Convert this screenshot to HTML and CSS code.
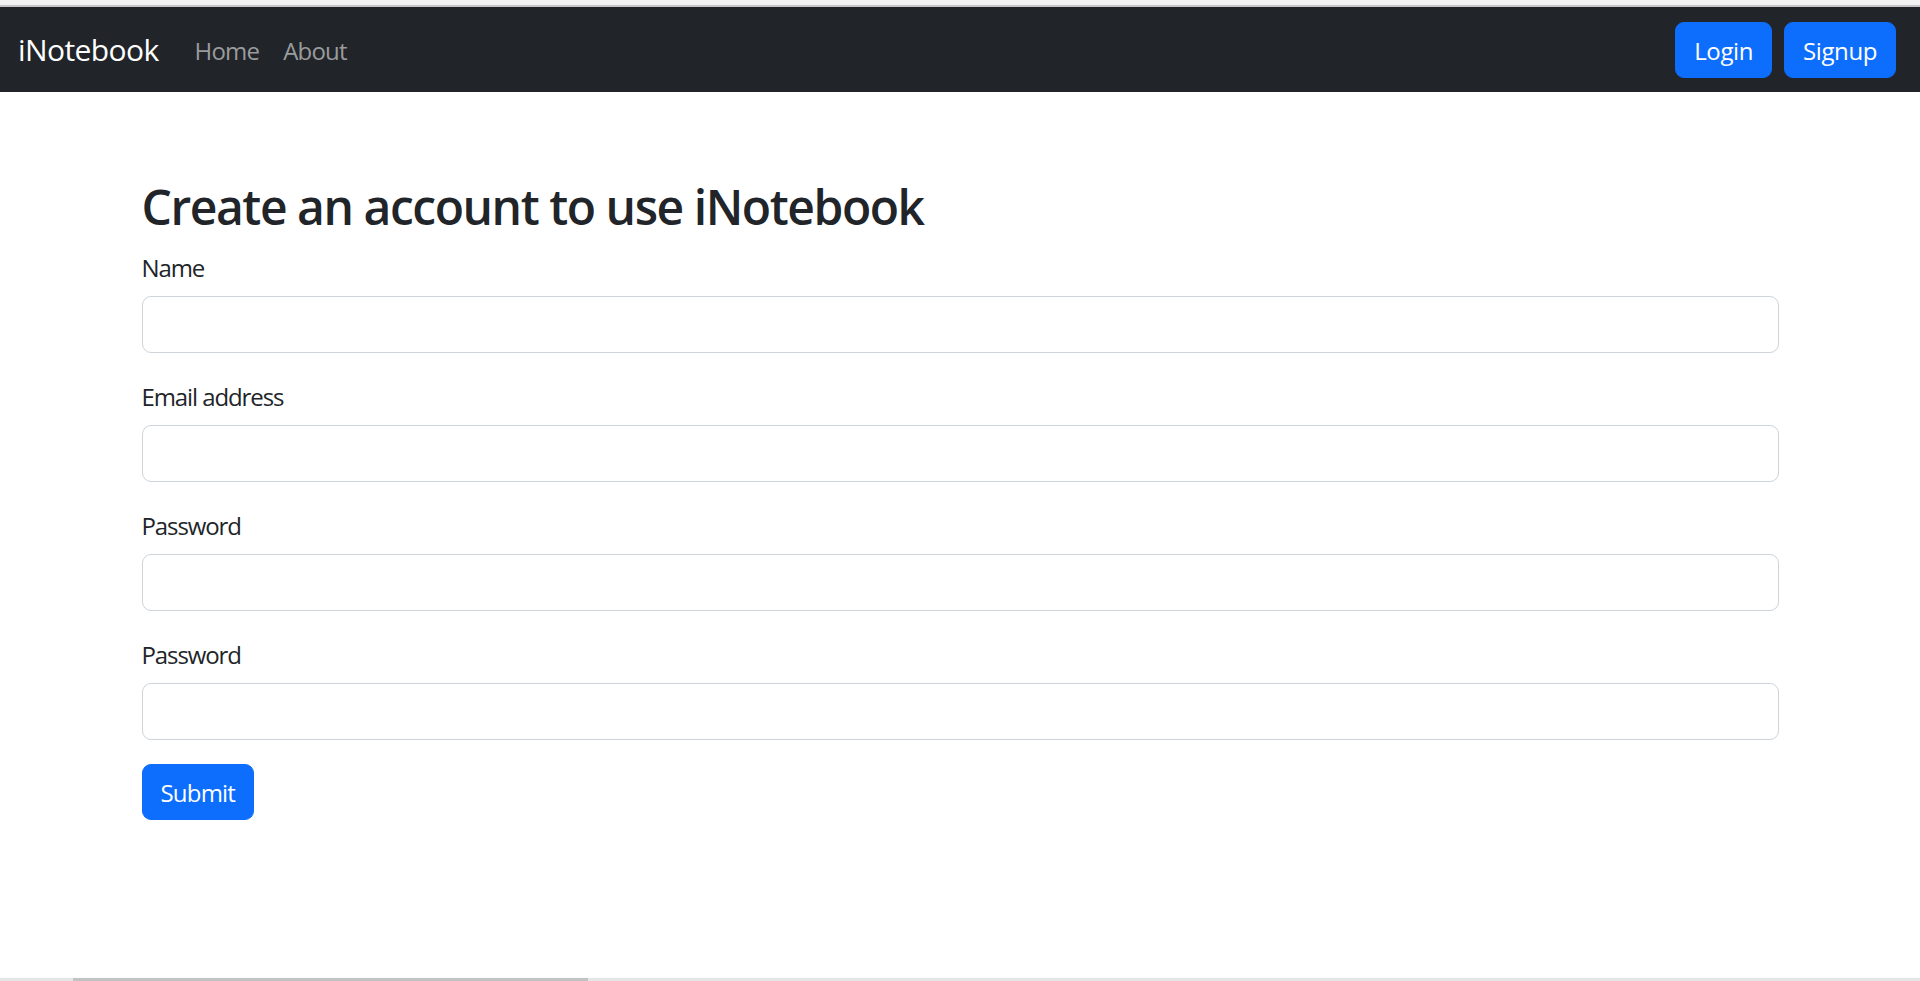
FILE: index.html
```html
<!DOCTYPE html>
<html lang="en">
<head>
<meta charset="utf-8">
<title>iNotebook</title>
<link rel="stylesheet" href="styles.css">
</head>
<body>
<div class="chrome-top"></div>
<nav class="navbar">
  <a class="brand" href="#">iNotebook</a>
  <ul class="nav-links">
    <li><a href="#">Home</a></li>
    <li><a href="#">About</a></li>
  </ul>
  <div class="nav-actions">
    <a class="btn" href="#">Login</a>
    <a class="btn" href="#">Signup</a>
  </div>
</nav>
<main class="page">
  <div class="container">
    <h2 class="title">Create an account to use iNotebook</h2>
    <form class="form">
      <div class="field">
        <label for="name">Name</label>
        <input id="name" type="text">
      </div>
      <div class="field">
        <label for="email">Email address</label>
        <input id="email" type="email">
      </div>
      <div class="field">
        <label for="password">Password</label>
        <input id="password" type="password">
      </div>
      <div class="field">
        <label for="cpassword">Password</label>
        <input id="cpassword" type="password">
      </div>
      <button type="submit" class="btn btn-submit">Submit</button>
    </form>
  </div>
</main>
<div class="scrollbar"><div class="thumb"></div></div>
</body>
</html>
```
FILE: styles.css
```css
* { box-sizing: border-box; }
html, body { margin: 0; padding: 0; }
body {
  height: 981px;
  overflow: hidden;
  display: flex;
  flex-direction: column;
  font-family: "Open Sans", "Noto Sans", sans-serif;
  font-size: 24px;
  line-height: 36px;
  color: #212529;
  background: #fff;
  letter-spacing: -0.4px;
}
.chrome-top {
  height: 7px;
  flex: none;
  background: #f3f3f3;
  border-bottom: 2px solid #c6c6c6;
}
.navbar {
  height: 85px;
  flex: none;
  background: #212529;
  display: flex;
  align-items: center;
  padding: 0 24px 0 18px;
}
.brand {
  color: #fff;
  text-decoration: none;
  font-size: 30px;
  line-height: 45px;
  margin-right: 24px;
  letter-spacing: -0.6px;
}
.nav-links {
  list-style: none;
  margin: 0;
  padding: 0;
  display: flex;
}
.nav-links a {
  display: block;
  padding: 13px 12px 11px;
  color: #9a9b9d;
  text-decoration: none;
  letter-spacing: -0.8px;
}
.nav-actions {
  margin-left: auto;
  display: flex;
  gap: 12px;
}
.btn {
  display: inline-block;
  background: #0d6efd;
  color: #fff;
  border: 1px solid #0d6efd;
  border-radius: 9px;
  padding: 10px 18px 8px;
  font-family: inherit;
  font-size: 24px;
  line-height: 36px;
  letter-spacing: -0.4px;
  text-decoration: none;
  cursor: pointer;
}
.btn-submit {
  letter-spacing: -0.8px;
}
.page {
  flex: 1;
  padding-top: 86px;
}
.container {
  max-width: 1637px;
  margin: 0 auto;
}
.title {
  margin: 0 0 12px;
  font-size: 48px;
  line-height: 57.6px;
  font-weight: 600;
  letter-spacing: -1.45px;
}
.field {
  margin-bottom: 24px;
}
.field label {
  display: block;
  padding-top: 2px;
  margin-bottom: 10px;
  letter-spacing: -1.1px;
}
.field input {
  display: block;
  width: 100%;
  height: 57px;
  border: 1px solid #ced4da;
  border-radius: 9px;
  padding: 9px 18px;
  font: inherit;
  background: #fff;
}
.scrollbar {
  height: 3px;
  flex: none;
  background: #e6e6e6;
  position: relative;
}
.thumb {
  position: absolute;
  left: 73px;
  width: 515px;
  top: 0;
  bottom: 0;
  background: #c3c3c3;
}
```
